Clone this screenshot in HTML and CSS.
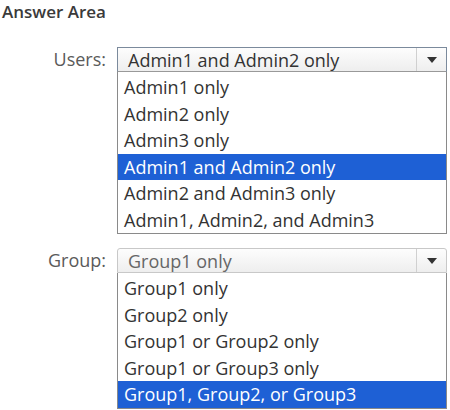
FILE: index.html
```html
<!DOCTYPE html>
<html lang="en">
<head>
  <meta charset="UTF-8">
  <title>Answer Area</title>
  <link rel="stylesheet" href="styles.css">
</head>
<body>

  <h1 class="title">Answer Area</h1>

  <section class="answer-area">
    <!-- Users dropdown -->
    <div class="answer-row">
      <label class="answer-label">Users:</label>
      <div class="dropdown">
        <div class="dropdown-select">
          <span class="dropdown-value">Admin1 and Admin2 only</span>
          <span class="dropdown-arrow"></span>
        </div>
        <ul class="dropdown-list">
          <li>Admin1 only</li>
          <li>Admin2 only</li>
          <li>Admin3 only</li>
          <li class="selected">Admin1 and Admin2 only</li>
          <li>Admin2 and Admin3 only</li>
          <li>Admin1, Admin2, and Admin3</li>
        </ul>
      </div>
    </div>

    <!-- Group dropdown -->
    <div class="answer-row">
      <label class="answer-label">Group:</label>
      <div class="dropdown">
        <div class="dropdown-select muted">
          <span class="dropdown-value">Group1 only</span>
          <span class="dropdown-arrow"></span>
        </div>
        <ul class="dropdown-list">
          <li>Group1 only</li>
          <li>Group2 only</li>
          <li>Group1 or Group2 only</li>
          <li>Group1 or Group3 only</li>
          <li class="selected">Group1, Group2, or Group3</li>
        </ul>
      </div>
    </div>
  </section>

</body>
</html>
```

FILE: styles.css
```css
body {
  font-family: 'Open Sans', sans-serif;
  margin: 0;
  padding: 0;
  background-color: #fff;
  color: #333;
}

.title {
  margin: 0;
  padding: 1px 0 0 2px;
  font-size: 17px;
  font-weight: 600;
  line-height: 22px;
  color: #3a3a3a;
}

.answer-area {
  display: flex;
  flex-direction: column;
  gap: 14px;
  padding-top: 24px;
}

.answer-row {
  display: grid;
  grid-template-columns: 106px 330px;
  column-gap: 11px;
  align-items: start;
}

.answer-label {
  text-align: right;
  font-size: 18px;
  line-height: 25px;
  color: #5a5a5a;
}

.dropdown-select {
  display: flex;
  height: 25px;
  border: 1px solid #7b8a9c;
  border-bottom-color: #999;
  background: linear-gradient(#fdfdfd, #eeeeee);
  box-sizing: border-box;
}

.dropdown-value {
  flex: 1;
  padding-left: 10px;
  font-size: 18px;
  line-height: 25px;
  color: #333;
  white-space: nowrap;
}

.muted {
  border-color: #c8c8c8;
  border-radius: 3px 3px 0 0;
}

.muted .dropdown-value {
  color: #666;
}

.dropdown-arrow {
  width: 29px;
  border-left: 1px solid #d0d0d0;
  display: flex;
  align-items: center;
  justify-content: center;
}

.dropdown-arrow::after {
  content: "";
  border-left: 5px solid transparent;
  border-right: 5px solid transparent;
  border-top: 6px solid #333;
}

.dropdown-list {
  list-style: none;
  margin: 0;
  padding: 2px 0 0;
  border: 1px solid #8a8a8a;
  border-top: none;
  background-color: #fff;
}

.dropdown-list li {
  height: 26.5px;
  padding-left: 6px;
  font-size: 18px;
  line-height: 26px;
  color: #333;
  white-space: nowrap;
}

.dropdown-list li.selected {
  background-color: #1e60d5;
  color: #fff;
}
```
